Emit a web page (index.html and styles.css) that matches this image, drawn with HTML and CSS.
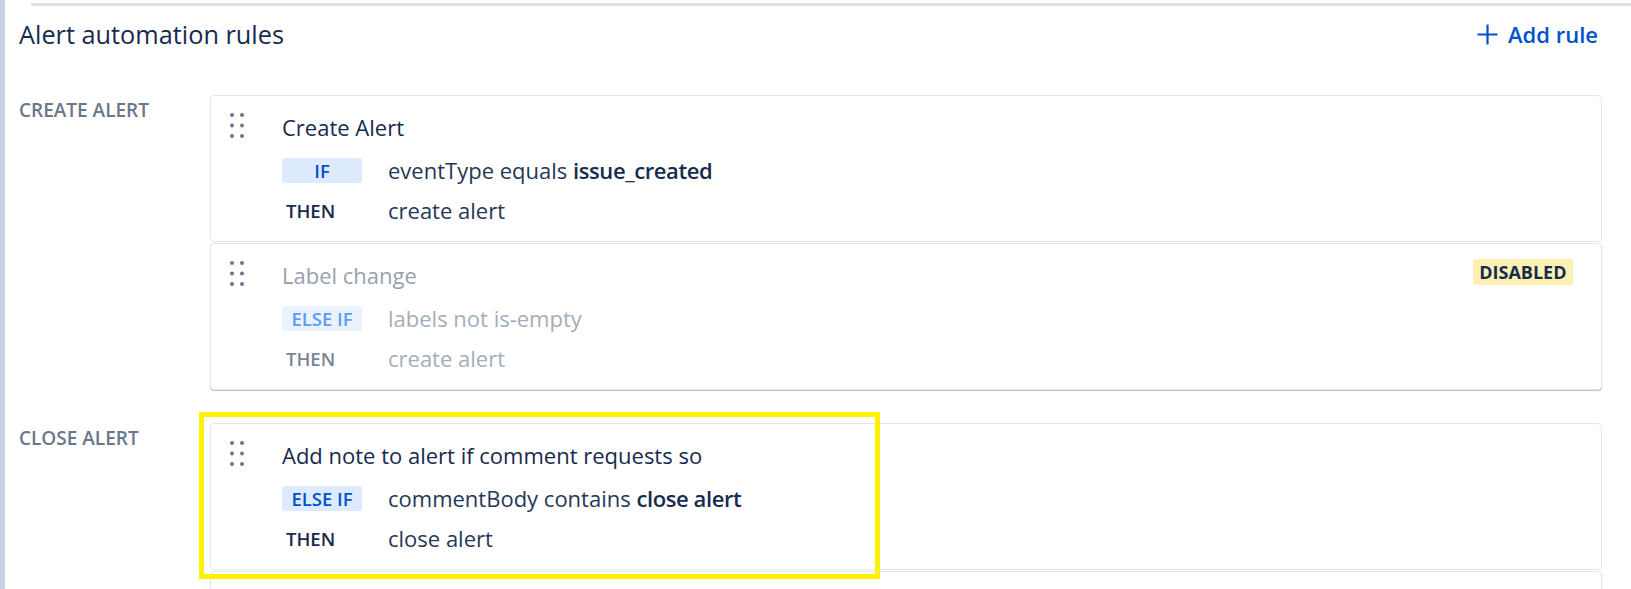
FILE: index.html
```html
<!DOCTYPE html>
<html lang="en">
<head>
<meta charset="utf-8">
<title>Alert automation rules</title>
<link rel="stylesheet" href="styles.css">
</head>
<body>
<div class="page">
  <main class="main">
    <div class="divider"></div>
    <header class="header">
      <h1 class="title">Alert automation rules</h1>
      <button class="add-rule" type="button">
        <svg class="plus" viewBox="0 0 21 21" width="21" height="21" aria-hidden="true"><path d="M10.5 0.5v20M0.5 10.5h20" stroke="currentColor" stroke-width="2.2" fill="none"/></svg>
        <span>Add rule</span>
      </button>
    </header>

    <section class="group">
      <div class="group-label">CREATE ALERT</div>
      <div class="cards">
        <div class="card">
          <svg class="handle" viewBox="0 0 14 25" width="14" height="25" aria-hidden="true"><circle cx="2" cy="2" r="2"/><circle cx="12" cy="2" r="2"/><circle cx="2" cy="12.5" r="2"/><circle cx="12" cy="12.5" r="2"/><circle cx="2" cy="23" r="2"/><circle cx="12" cy="23" r="2"/></svg>
          <div class="card-body">
            <div class="title-row"><span class="card-title">Create Alert</span></div>
            <div class="rule-row"><span class="badge">IF</span><span class="cond">eventType equals <b>issue_created</b></span></div>
            <div class="rule-row"><span class="kw">THEN</span><span class="cond">create alert</span></div>
          </div>
        </div>
        <div class="card card-disabled">
          <svg class="handle" viewBox="0 0 14 25" width="14" height="25" aria-hidden="true"><circle cx="2" cy="2" r="2"/><circle cx="12" cy="2" r="2"/><circle cx="2" cy="12.5" r="2"/><circle cx="12" cy="12.5" r="2"/><circle cx="2" cy="23" r="2"/><circle cx="12" cy="23" r="2"/></svg>
          <div class="card-body">
            <div class="title-row"><span class="card-title">Label change</span><span class="lozenge">DISABLED</span></div>
            <div class="rule-row"><span class="badge">ELSE IF</span><span class="cond">labels not is-empty</span></div>
            <div class="rule-row"><span class="kw">THEN</span><span class="cond">create alert</span></div>
          </div>
        </div>
      </div>
    </section>

    <section class="group">
      <div class="group-label">CLOSE ALERT</div>
      <div class="cards">
        <div class="card">
          <div class="highlight"></div>
          <svg class="handle" viewBox="0 0 14 25" width="14" height="25" aria-hidden="true"><circle cx="2" cy="2" r="2"/><circle cx="12" cy="2" r="2"/><circle cx="2" cy="12.5" r="2"/><circle cx="12" cy="12.5" r="2"/><circle cx="2" cy="23" r="2"/><circle cx="12" cy="23" r="2"/></svg>
          <div class="card-body">
            <div class="title-row"><span class="card-title">Add note to alert if comment requests so</span></div>
            <div class="rule-row"><span class="badge">ELSE IF</span><span class="cond">commentBody contains <b>close alert</b></span></div>
            <div class="rule-row"><span class="kw">THEN</span><span class="cond">close alert</span></div>
          </div>
        </div>
        <div class="card card-empty">
          <svg class="handle" viewBox="0 0 14 25" width="14" height="25" aria-hidden="true"><circle cx="2" cy="2" r="2"/><circle cx="12" cy="2" r="2"/><circle cx="2" cy="12.5" r="2"/><circle cx="12" cy="12.5" r="2"/><circle cx="2" cy="23" r="2"/><circle cx="12" cy="23" r="2"/></svg>
          <div class="card-body"></div>
        </div>
      </div>
    </section>
  </main>
</div>
</body>
</html>
```

FILE: styles.css
```css
* {
  box-sizing: border-box;
}

html, body {
  margin: 0;
  background: #ffffff;
}

body {
  font-family: "Open Sans", "Noto Sans", sans-serif;
  color: #172b4d;
  overflow: hidden;
}

.page {
  display: flex;
  min-height: 100vh;
  border-left: 5px solid #c9d1e1;
}

.main {
  flex: 1;
  padding: 3px 29px 0 14px;
}

.divider {
  height: 3px;
  background: #dfe1e6;
  margin-left: 12px;
  margin-right: -29px;
}

.header {
  height: 56px;
  display: flex;
  align-items: center;
  justify-content: space-between;
  margin-bottom: 33px;
}

.title {
  margin: 0;
  font-size: 25.3px;
  font-weight: 500;
  line-height: 32px;
  color: #172b4d;
}

.add-rule {
  display: flex;
  align-items: center;
  gap: 10px;
  margin-right: 4px;
  padding: 0;
  border: 0;
  background: none;
  color: #0052cc;
  font-family: inherit;
  font-size: 22px;
  font-weight: 600;
  line-height: 30px;
  cursor: pointer;
}

.plus {
  display: block;
  flex: none;
}

.group {
  display: grid;
  grid-template-columns: 191px 1fr;
  margin-bottom: 33px;
}

.group-label {
  padding-top: 3px;
  font-size: 19px;
  font-weight: 600;
  line-height: 24px;
  color: #6b778c;
}

.cards {
  display: flex;
  flex-direction: column;
  gap: 1px;
}

.card {
  position: relative;
  display: flex;
  align-items: flex-start;
  padding: 14px 28px 14px 19px;
  border: 1px solid #e4e6eb;
  border-radius: 4px;
  background: #ffffff;
}

.card:last-child {
  box-shadow: 0 1px 1px rgba(9, 30, 66, 0.28);
}

.card-empty {
  min-height: 147px;
}

.handle {
  display: block;
  flex: none;
  margin: 3px 38px 0 0;
  fill: #6b778c;
}

.card-body {
  flex: 1;
  display: flex;
  flex-direction: column;
}

.title-row {
  display: flex;
  align-items: flex-start;
  justify-content: space-between;
  height: 34px;
  margin-bottom: 9px;
}

.card-title {
  font-size: 22px;
  line-height: 34px;
  color: #172b4d;
}

.rule-row {
  display: flex;
  align-items: center;
  height: 34px;
}

.rule-row + .rule-row {
  margin-top: 6px;
}

.badge {
  flex: none;
  width: 80px;
  height: 25px;
  margin-right: 26px;
  display: flex;
  align-items: center;
  justify-content: center;
  border-radius: 3px;
  background: #deebff;
  color: #0052cc;
  font-size: 18.5px;
  font-weight: 600;
  line-height: 25px;
}

.kw {
  flex: none;
  width: 80px;
  margin-right: 26px;
  padding-left: 4px;
  font-size: 18.5px;
  font-weight: 600;
  line-height: 25px;
  color: #172b4d;
}

.cond {
  font-size: 22px;
  line-height: 34px;
  color: #253858;
}

.cond b {
  font-weight: 600;
  letter-spacing: -0.4px;
  color: #172b4d;
}

.card-disabled .card-title {
  color: #97a0af;
}

.card-disabled .cond {
  color: #a5adba;
}

.card-disabled .kw {
  color: #7a869a;
}

.card-disabled .badge {
  background: #ebf2ff;
  color: #5a9cf5;
}

.lozenge {
  margin-top: 1px;
  padding: 0 6.5px;
  border-radius: 3px;
  background: #fff0b3;
  color: #172b4d;
  font-size: 18px;
  font-weight: 700;
  line-height: 26px;
}

.highlight {
  position: absolute;
  left: -12px;
  top: -12px;
  width: 681px;
  height: 167px;
  border: 5px solid #fff200;
  pointer-events: none;
  z-index: 2;
}
```
